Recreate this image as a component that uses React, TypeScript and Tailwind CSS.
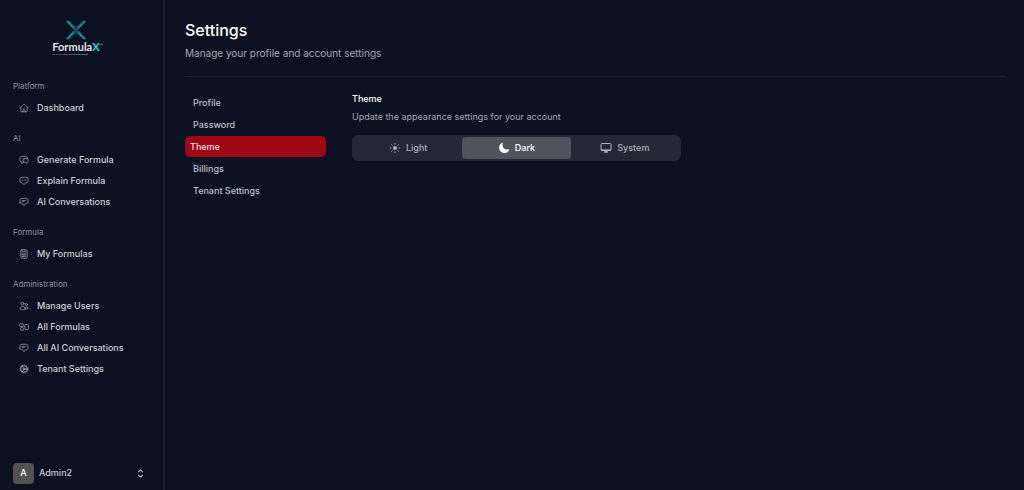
import { useState } from 'react'
import type { ReactNode } from 'react'
import {
  HiChevronUpDown,
  HiMoon,
  HiOutlineChatBubbleBottomCenterText,
  HiOutlineChatBubbleLeftRight,
  HiOutlineHome,
  HiOutlineUsers
} from 'react-icons/hi2'

interface IconProps {
  className?: string
}

interface NavItem {
  label: string
  icon: (props: IconProps) => ReactNode
}

interface NavGroup {
  heading: string
  items: NavItem[]
}

function ChatDots({ className }: IconProps) {
  return (
    <svg className={className} viewBox="0 0 24 24" fill="none" stroke="currentColor" strokeWidth="1.5" strokeLinecap="round" strokeLinejoin="round">
      <path d="M2.25 12.76c0 1.6 1.12 2.99 2.7 3.23 1.09.16 2.19.28 3.3.37L12 21l3.75-4.64c1.11-.09 2.21-.21 3.3-.37 1.58-.24 2.7-1.63 2.7-3.23V6.74c0-1.6-1.12-2.99-2.7-3.23a48.3 48.3 0 0 0-14.1 0c-1.58.24-2.7 1.63-2.7 3.23v6.02Z" />
      <path strokeWidth="2.5" d="M7.5 9.75h.01M12 9.75h.01M16.5 9.75h.01" />
    </svg>
  )
}

function CalculatorIcon({ className }: IconProps) {
  return (
    <svg className={className} viewBox="0 0 24 24" fill="none" stroke="currentColor" strokeWidth="1.7" strokeLinecap="round" strokeLinejoin="round">
      <rect x="4.5" y="2" width="15" height="20" rx="2.25" />
      <path d="M8 6.5h8M8 11.5h8M8 14.5h8M8 18h5M16 18h.01" />
    </svg>
  )
}

function ShapesIcon({ className }: IconProps) {
  return (
    <svg className={className} viewBox="0 0 24 24" fill="none" stroke="currentColor" strokeWidth="1.7" strokeLinejoin="round">
      <rect x="1.5" y="4" width="9" height="6.5" rx="2" />
      <rect x="4" y="13.5" width="7" height="6.5" rx="2" />
      <rect x="14" y="6" width="8.5" height="12" rx="2" />
    </svg>
  )
}

function CogIcon({ className }: IconProps) {
  return (
    <svg className={className} viewBox="0 0 24 24" fill="none" stroke="currentColor" strokeLinecap="round">
      <circle cx="12" cy="12" r="8" strokeWidth="2" />
      <circle cx="12" cy="12" r="9.7" strokeWidth="1.5" strokeDasharray="1.2 3.88" />
      <circle cx="12" cy="12" r="2.2" strokeWidth="1.6" />
      <path strokeWidth="1.8" d="M14.5 12H20M10.8 9.8 8 5M10.8 14.2 8 19" />
    </svg>
  )
}

function MonitorIcon({ className }: IconProps) {
  return (
    <svg className={className} viewBox="0 0 24 24" fill="none" stroke="currentColor" strokeWidth="2" strokeLinejoin="round">
      <rect x="2" y="3" width="20" height="14" rx="2" />
      <path d="M2 16h20" strokeWidth="2.5" />
      <path d="M9.5 17.5h5l1 3.5h-7Z" fill="currentColor" strokeWidth="1" />
    </svg>
  )
}

function SunIcon({ className }: IconProps) {
  return (
    <svg className={className} viewBox="0 0 24 24" fill="none" stroke="currentColor" strokeWidth="2" strokeLinecap="round">
      <circle cx="12" cy="12" r="4" fill="currentColor" stroke="none" />
      <path d="M12 2.5v1.5M12 20v1.5M2.5 12H4M20 12h1.5M5.3 5.3l1 1M17.7 17.7l1 1M5.3 18.7l1-1M17.7 6.3l1-1" />
    </svg>
  )
}

const NAV: NavGroup[] = [
  { heading: 'Platform', items: [{ label: 'Dashboard', icon: HiOutlineHome }] },
  {
    heading: 'AI',
    items: [
      { label: 'Generate Formula', icon: HiOutlineChatBubbleLeftRight },
      { label: 'Explain Formula', icon: ChatDots },
      { label: 'AI Conversations', icon: HiOutlineChatBubbleBottomCenterText }
    ]
  },
  { heading: 'Formula', items: [{ label: 'My Formulas', icon: CalculatorIcon }] },
  {
    heading: 'Administration',
    items: [
      { label: 'Manage Users', icon: HiOutlineUsers },
      { label: 'All Formulas', icon: ShapesIcon },
      { label: 'All AI Conversations', icon: HiOutlineChatBubbleBottomCenterText },
      { label: 'Tenant Settings', icon: CogIcon }
    ]
  }
]

const SETTINGS_LINKS = ['Profile', 'Password', 'Theme', 'Billings', 'Tenant Settings']

const THEMES = [
  { value: 'light', label: 'Light', icon: SunIcon },
  { value: 'dark', label: 'Dark', icon: HiMoon },
  { value: 'system', label: 'System', icon: MonitorIcon }
]

function Logo() {
  return (
    <a href="#" aria-label="FormulaX" className="ml-10 flex w-12 flex-col items-center font-['Lato',sans-serif]">
      <svg className="h-5 w-5" viewBox="0 0 20 20" fill="none" strokeLinecap="round">
        <g stroke="#1d8797">
          <path d="M1.5 1.5 8 8.2M18.5 1.5 12 8.2M1.5 18.5 8 11.8M18.5 18.5 12 11.8" strokeWidth="2" />
          <path d="M4 1.5Q10 12.5 16 1.5M4 18.5Q10 7.5 16 18.5" strokeDasharray="1.5 1.8" strokeWidth="1" />
        </g>
        <path d="M8 8l4 4M12 8l-4 4" stroke="#145f74" strokeWidth="2" />
      </svg>
      <span className="relative text-[11px] leading-[14px] font-bold text-[#e2e5ea]">
        Formula<span className="font-black text-[#19d3dc]">X</span>
        <svg className="absolute top-1 -right-1 h-1 w-1" viewBox="0 0 4 4" stroke="#178b98" strokeWidth="1">
          <path d="M0 .5h3" />
        </svg>
      </span>
      <span className="h-px w-9 self-start bg-linear-to-r from-[#8f2632] via-[#6c3242] to-[#167f8d]" />
    </a>
  )
}

function Sidebar() {
  return (
    <aside className="flex w-[165px] shrink-0 flex-col border-r-2 border-[#1c212e] px-3 pt-5 pb-[3px]">
      <Logo />
      <nav className="mt-[21px] flex flex-col gap-[10px]">
        {NAV.map((group) => (
          <div key={group.heading}>
            <h2 className="px-px text-[8px] leading-[21px] text-[#8f939c]">{group.heading}</h2>
            {group.items.map(({ label, icon: Icon }) => (
              <a
                key={label}
                href="#"
                className="flex h-[21px] items-center gap-2 whitespace-nowrap pl-[7px] text-[9px] font-medium text-[#cdd0d5]"
              >
                <Icon className="h-[10px] w-[10px] text-[#b2b5bc]" />
                {label}
              </a>
            ))}
          </div>
        ))}
      </nav>
      <button type="button" className="mt-auto flex h-7 items-center gap-[5px] px-px text-left">
        <span className="flex h-[21px] w-[21px] items-center justify-center rounded bg-[#525252] text-[9px] font-medium text-white">A</span>
        <span className="text-[9px] font-medium text-[#c9ccd2]">Admin2</span>
        <HiChevronUpDown className="mr-[3px] ml-auto h-[13px] w-[13px] text-[#d4d6da]" />
      </button>
    </aside>
  )
}

export default function App() {
  const [theme, setTheme] = useState('dark')

  return (
    <div className="flex min-h-screen bg-[#0b1120] font-['Inter',sans-serif]">
      <Sidebar />
      <main className="min-w-0 flex-1 px-5 pt-5 pr-[18px]">
        {/* Page header */}
        <header className="border-b border-[#1c212e] pb-[15px]">
          <h1 className="text-[16px] leading-5 font-medium text-white">Settings</h1>
          <p className="mt-[5px] text-[10px] leading-4 text-[#a5a8af]">Manage your profile and account settings</p>
        </header>

        <div className="flex gap-[26px] pt-[15px]">
          <nav className="flex w-[141px] shrink-0 flex-col gap-px">
            {SETTINGS_LINKS.map((link) => (
              <a
                key={link}
                href="#"
                className={`flex h-[21px] items-center rounded-[5px] text-[9px] font-medium ${
                  link === 'Theme' ? 'bg-[#9f0712] px-[5px] text-[#f3dede]' : 'px-2 text-[#bfc2c8]'
                }`}
              >
                {link}
              </a>
            ))}
          </nav>

          <section className="min-w-0 flex-1">
            <h2 className="text-[9px] leading-[13px] font-medium text-white">Theme</h2>
            <p className="mt-[5px] text-[9px] leading-[13px] text-[#a5a8af]">Update the appearance settings for your account</p>

            {/* Theme switcher */}
            <div
              role="radiogroup"
              aria-label="Theme"
              className="mt-3 grid h-[26px] max-w-[329px] grid-cols-3 rounded-md bg-[#232836] p-[2px]"
            >
              {THEMES.map(({ value, label, icon: Icon }) => (
                <label
                  key={value}
                  className={`relative flex cursor-pointer items-center justify-center gap-[5px] rounded text-[9px] font-medium ${
                    theme === value ? 'bg-[#50545f] text-white' : 'text-[#aeb1b8]'
                  }`}
                >
                  <input
                    type="radio"
                    name="theme"
                    value={value}
                    checked={theme === value}
                    onChange={() => setTheme(value)}
                    className="absolute inset-0 cursor-pointer appearance-none"
                  />
                  <Icon className="h-3 w-3" />
                  {label}
                </label>
              ))}
            </div>
          </section>
        </div>
      </main>
    </div>
  )
}
